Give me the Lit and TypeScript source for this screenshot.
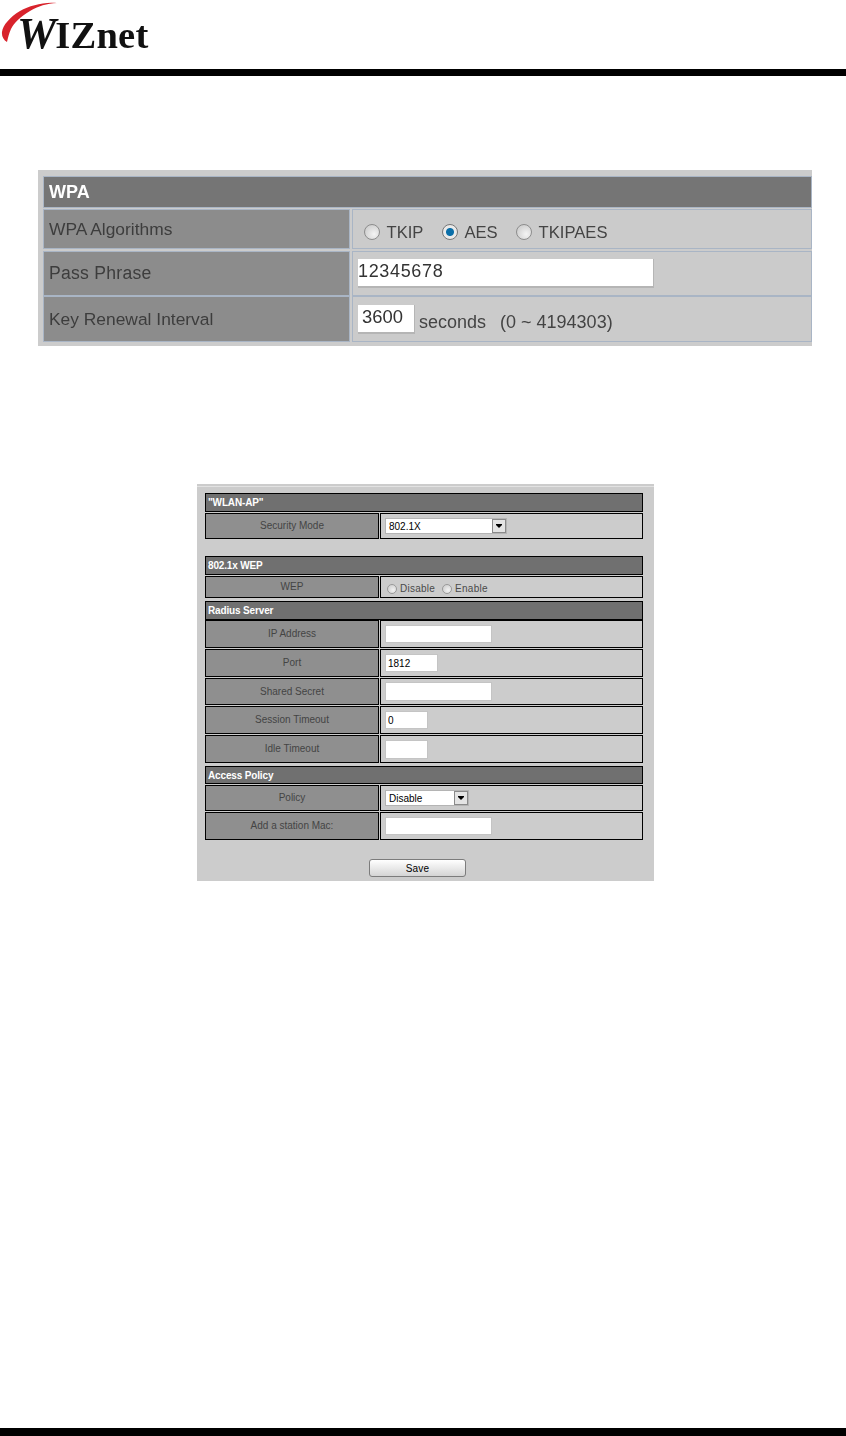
import { LitElement, html, css } from "lit";
import { customElement } from "lit/decorators.js";

type Ctl =
  | { k: "input"; w: number; h: number; v?: string }
  | { k: "select"; w: number; v: string }
  | { k: "radios"; items: string[] };

type Row =
  | { t: "head"; label: string; h: number; mt?: number }
  | { t: "row"; label: string; h: number; mt?: number; ctl: Ctl };

const rows: Row[] = [
  { t: "head", label: '"WLAN-AP"', h: 19 },
  { t: "row", label: "Security Mode", h: 26, mt: 1, ctl: { k: "select", w: 122, v: "802.1X" } },
  { t: "head", label: "802.1x WEP", h: 19, mt: 17 },
  { t: "row", label: "WEP", h: 22, mt: 1, ctl: { k: "radios", items: ["Disable", "Enable"] } },
  { t: "head", label: "Radius Server", h: 19, mt: 3 },
  { t: "row", label: "IP Address", h: 28, ctl: { k: "input", w: 107, h: 18 } },
  { t: "row", label: "Port", h: 28, mt: 1, ctl: { k: "input", w: 53, h: 18, v: "1812" } },
  { t: "row", label: "Shared Secret", h: 27, mt: 1, ctl: { k: "input", w: 107, h: 19 } },
  { t: "row", label: "Session Timeout", h: 28, mt: 1, ctl: { k: "input", w: 43, h: 18, v: "0" } },
  { t: "row", label: "Idle Timeout", h: 28, mt: 1, ctl: { k: "input", w: 43, h: 19 } },
  { t: "head", label: "Access Policy", h: 18, mt: 3 },
  { t: "row", label: "Policy", h: 26, mt: 1, ctl: { k: "select", w: 84, v: "Disable" } },
  { t: "row", label: "Add a station Mac:", h: 28, mt: 1, ctl: { k: "input", w: 107, h: 18 } },
];

@customElement("app-root")
export class AppRoot extends LitElement {
  static styles = css`
    :host {
      display: flex;
      flex-direction: column;
      height: 1436px;
      width: 846px;
      background: #fff;
      font-family: "Liberation Sans", Arial, sans-serif;
      overflow: hidden;
    }
    .brand {
      position: relative;
      height: 69px;
      flex: none;
      filter: blur(0.4px);
    }
    .logo {
      position: absolute;
      left: 17px;
      top: 12px;
      font: bold 38.5px/44px "Liberation Serif", "Times New Roman", serif;
      color: #111;
      letter-spacing: 0.3px;
      white-space: nowrap;
    }
    .logo i {
      font-style: italic;
      font-size: 44px;
      letter-spacing: -1px;
    }
    .swoosh {
      position: absolute;
      left: 0;
      top: 0;
      width: 70px;
      height: 50px;
    }
    .rule {
      height: 7px;
      background: #000;
      flex: none;
    }
    .spacer {
      flex: 1;
    }
    .foot {
      height: 8px;
    }

    /* WPA */
    .wpa {
      margin: 94px 0 0 38px;
      width: 774px;
      height: 176px;
      box-sizing: border-box;
      padding: 6px 0 0 5px;
      background: #ccc;
      display: flex;
      flex-direction: column;
      flex: none;
      font-size: 18px;
      color: #444;
      filter: blur(0.35px);
    }
    .wpa-head {
      height: 32px;
      box-sizing: border-box;
      border: 1px solid #a9b5c5;
      background: #757575;
      color: #fff;
      font-weight: bold;
      display: flex;
      align-items: center;
      padding-left: 5px;
    }
    .wpa-row {
      display: grid;
      grid-template-columns: 307px 1fr;
      column-gap: 2px;
    }
    .wpa-row > * {
      box-sizing: border-box;
      border: 1px solid #a9b5c5;
      display: flex;
      align-items: center;
    }
    .wpa-label {
      background: #8c8c8c;
      padding-left: 5px;
      color: #3d3d3d;
      font-size: 17.4px;
    }
    .wpa-label.wide {
      letter-spacing: 0.25px;
      font-size: 17.6px;
    }
    .wpa-val {
      background: #cbcbcb;
      padding-left: 5px;
    }
    .r1 { height: 40px; margin-top: 1px; }
    .r2 { height: 45px; margin-top: 2px; }
    .r3 { height: 46px; }
    .wpa-radios {
      padding-left: 11px;
      padding-top: 6px;
      font-size: 16.6px;
    }
    .wr {
      width: 16px;
      height: 16px;
      border-radius: 50%;
      box-sizing: border-box;
      border: 1px solid #8d8d8d;
      background: radial-gradient(circle at 65% 65%, #f4f4f4, #c4c4c4);
      flex: none;
      margin-right: 6.5px;
    }
    .wr.on {
      background: radial-gradient(circle, #0a6ea8 0 3.5px, #eaeaea 4.5px);
      border-color: #777;
    }
    .wl {
      margin-right: 18.5px;
      position: relative;
      top: 1px;
    }
    .wpa-in {
      box-sizing: border-box;
      background: #fff;
      border: 1px solid #b5b5b5;
      border-width: 0 1px 2px 0;
      color: #333;
      margin: 0;
      outline: none;
      display: block;
    }
    .pass {
      width: 296px;
      height: 29px;
      font: 18px "Liberation Sans", Arial, sans-serif;
      letter-spacing: 0.65px;
      padding: 0 0 3px 0;
    }
    .secs {
      width: 57px;
      height: 29px;
      margin-right: 4px;
      font: 18.4px "Liberation Sans", Arial, sans-serif;
      padding: 0 0 3px 4px;
    }
    .unit { margin-right: 14px; position: relative; top: 3px; }

    /* second panel */
    .sec {
      margin: 138px 0 0 197px;
      width: 457px;
      height: 397px;
      box-sizing: border-box;
      background: #ccc;
      padding: 9px 11px 0 8px;
      flex: none;
      position: relative;
      font-size: 10px;
      color: #4a4a4a;
      display: flex;
      flex-direction: column;
    }
    .sec::before {
      content: "";
      position: absolute;
      left: 0;
      right: 0;
      top: 2px;
      height: 1px;
      background: #e2e2e2;
    }
    .head {
      box-sizing: border-box;
      border: 1px solid #000;
      background: #707070;
      color: #fff;
      font-weight: bold;
      letter-spacing: -0.15px;
      padding-left: 2px;
      display: flex;
      align-items: center;
      flex: none;
    }
    .row {
      display: grid;
      grid-template-columns: 174px 1fr;
      column-gap: 1px;
      flex: none;
    }
    .lab, .val {
      box-sizing: border-box;
      border: 1px solid #000;
      display: flex;
      align-items: center;
    }
    .lab {
      background: #8f8f8f;
      justify-content: center;
      padding-bottom: 1px;
      color: #444;
    }
    .val {
      padding-left: 4px;
      background: #ccc;
    }
    .in {
      box-sizing: border-box;
      background: #fff;
      border: 1px solid #c4c4c4;
      font: 10px "Liberation Sans", Arial, sans-serif;
      color: #000;
      padding: 0 0 0 2px;
      margin: 0;
      outline: none;
      display: block;
    }
    .sel {
      height: 16px;
      box-sizing: border-box;
      background: #fff;
      border: 1px solid #b4b4b4;
      display: flex;
      align-items: center;
      justify-content: space-between;
      padding-left: 3px;
      color: #000;
    }
    .btn {
      width: 14px;
      height: 14px;
      box-sizing: border-box;
      border: 1px solid #8a8a8a;
      background: #e4e4e4;
      display: flex;
      align-items: center;
      justify-content: center;
    }
    .btn svg {
      width: 6px;
      height: 4px;
    }
    .rad {
      display: flex;
      align-items: center;
      padding: 3px 0 0 2px;
      color: #4a4a4a;
      letter-spacing: 0.25px;
    }
    .rd {
      width: 10px;
      height: 10px;
      box-sizing: border-box;
      border: 1px solid #9a9a9a;
      border-radius: 50%;
      background: radial-gradient(circle at 65% 65%, #f2f2f2, #c8c8c8);
      margin-right: 3px;
    }
    .rl {
      margin-right: 7px;
    }
    .save-wrap {
      margin-top: 19px;
      padding-left: 164px;
    }
    .save {
      box-sizing: border-box;
      width: 97px;
      height: 18px;
      border: 1px solid #7c7c7c;
      border-radius: 3px;
      background: linear-gradient(#fff, #d4d4d4);
      font: 10px "Liberation Sans", Arial, sans-serif;
      letter-spacing: 0.2px;
      color: #000;
      padding: 0;
      display: block;
    }
  `;

  private ctl(c: Ctl) {
    if (c.k === "input") {
      return html`<input class="in" style="width:${c.w}px;height:${c.h}px" .value=${c.v ?? ""} />`;
    }
    if (c.k === "select") {
      return html`<div class="sel" style="width:${c.w}px">
        <span>${c.v}</span>
        <span class="btn"><svg viewBox="0 0 6 4"><path d="M0 0h6v1L3 4 0 1z" fill="#000" /></svg></span>
      </div>`;
    }
    return html`<div class="rad">
      ${c.items.map((i) => html`<span class="rd"></span><span class="rl">${i}</span>`)}
    </div>`;
  }

  private row(r: Row) {
    const m = r.mt ? `margin-top:${r.mt}px;` : "";
    if (r.t === "head") {
      return html`<div class="head" style="${m}height:${r.h}px">${r.label}</div>`;
    }
    return html`<div class="row" style="${m}height:${r.h}px">
      <div class="lab">${r.label}</div>
      <div class="val">${this.ctl(r.ctl)}</div>
    </div>`;
  }

  render() {
    return html`
      <div class="brand">
        <svg class="swoosh" viewBox="0 0 70 50">
          <path
            d="M7 42C3.500 40 1.500 36 2 32C3 25 10 17 20 11C30 5.500 44 1.500 57 3C47 3.500 38 6 30 11C20 17 14 23 11 29C9 33 8 38 7 42Z"
            fill="#d8232c"
          />
        </svg>
        <div class="logo"><i>W</i>IZnet</div>
      </div>
      <div class="rule"></div>

      <section class="wpa">
        <div class="wpa-head">WPA</div>
        <div class="wpa-row r1">
          <div class="wpa-label">WPA Algorithms</div>
          <div class="wpa-val wpa-radios">
            <span class="wr"></span><span class="wl">TKIP</span>
            <span class="wr on"></span><span class="wl">AES</span>
            <span class="wr"></span><span class="wl">TKIPAES</span>
          </div>
        </div>
        <div class="wpa-row r2">
          <div class="wpa-label wide">Pass Phrase</div>
          <div class="wpa-val"><input class="wpa-in pass" .value=${"12345678"} /></div>
        </div>
        <div class="wpa-row r3">
          <div class="wpa-label">Key Renewal Interval</div>
          <div class="wpa-val">
            <input class="wpa-in secs" .value=${"3600"} />
            <span class="unit">seconds</span><span class="unit">(0 ~ 4194303)</span>
          </div>
        </div>
      </section>

      <section class="sec">
        ${rows.map((r) => this.row(r))}
        <div class="save-wrap"><button class="save">Save</button></div>
      </section>

      <div class="spacer"></div>
      <div class="rule foot"></div>
    `;
  }
}
